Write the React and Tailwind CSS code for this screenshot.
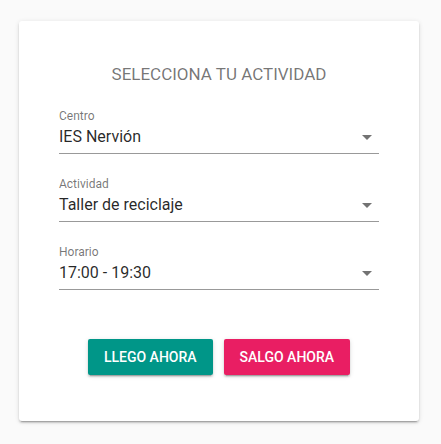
import React from "react";

const fields = [
  { label: "Centro", value: "IES Nervión" },
  { label: "Actividad", value: "Taller de reciclaje" },
  { label: "Horario", value: "17:00 - 19:30" },
];

function SelectField({ label, value }) {
  return (
    <div className="flex flex-col w-[320px]">
      <span className="text-[12px] leading-[16px] text-black/55">{label}</span>
      <div className="mt-px flex items-center justify-between pb-1 border-b border-black/40">
        <span className="text-[16px] leading-[24px] text-black/85">{value}</span>
        {/* dropdown arrow */}
        <span className="mr-[7px] w-0 h-0 border-x-[5px] border-x-transparent border-t-[5px] border-t-black/55" />
      </div>
    </div>
  );
}

export default function App() {
  return (
    <div className="min-h-[444px] bg-[#fafafa] pt-[21px] pl-[19px] font-['Roboto',sans-serif]">
      <div className="w-[400px] h-[400px] bg-white rounded-[3px] shadow-[0_3px_1px_-2px_rgba(0,0,0,0.2),0_2px_2px_0_rgba(0,0,0,0.14),0_1px_5px_0_rgba(0,0,0,0.12)] flex flex-col items-center pt-[41px]">
        {/* Title */}
        <h2 className="text-[17px] leading-[24px] text-black/55 uppercase">
          Selecciona tu actividad
        </h2>

        {/* Fields */}
        <div className="mt-[22px] flex flex-col gap-[22px]">
          {fields.map((f) => (
            <SelectField key={f.label} {...f} />
          ))}
        </div>

        {/* Buttons */}
        <div className="mt-[49px] flex gap-[11px]">
          <button className="h-9 px-4 rounded-[2px] bg-[#009688] text-white text-[14px] font-medium uppercase shadow-[0_3px_1px_-2px_rgba(0,0,0,0.2),0_2px_2px_0_rgba(0,0,0,0.14),0_1px_5px_0_rgba(0,0,0,0.12)]">
            Llego ahora
          </button>
          <button className="h-9 px-4 rounded-[2px] bg-[#e91e63] text-white text-[14px] font-medium uppercase shadow-[0_3px_1px_-2px_rgba(0,0,0,0.2),0_2px_2px_0_rgba(0,0,0,0.14),0_1px_5px_0_rgba(0,0,0,0.12)]">
            Salgo ahora
          </button>
        </div>
      </div>
    </div>
  );
}
